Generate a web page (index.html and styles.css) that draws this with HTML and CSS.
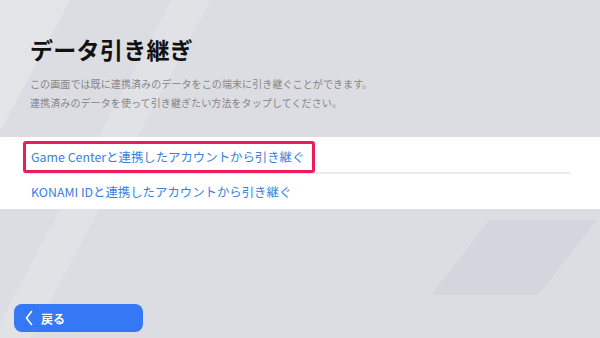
FILE: index.html
```
<!DOCTYPE html>
<html lang="ja">
<head>
<meta charset="utf-8">
<title>データ引き継ぎ</title>
<link rel="stylesheet" href="styles.css">
</head>
<body>

<div class="Screen">
    <div class="Header">
        <h1 class="Title">データ引き継ぎ</h1>
        <p class="Lead">
            この画面では既に連携済みのデータをこの端末に引き継ぐことができます。<br>
            連携済みのデータを使って引き継ぎたい方法をタップしてください。
        </p>
    </div>

    <div class="Panel">
        <ul class="MethodList">
            <li class="MethodRow First">
                <a class="MethodLink Selected" href="#">Game Centerと連携したアカウントから引き継ぐ</a>
            </li>
            <li class="MethodRow">
                <a class="MethodLink" href="#">KONAMI IDと連携したアカウントから引き継ぐ</a>
            </li>
        </ul>
    </div>

    <div class="Footer">
        <a class="BackButton" href="#">
            <svg class="BackIcon" width="8" height="16" viewBox="0 0 8 16">
                <path d="M6.5 1.5 L1.5 8 L6.5 14.5" fill="none" stroke="#fff" stroke-width="1.6" stroke-linecap="round" stroke-linejoin="round"/>
            </svg>
            <span>戻る</span>
        </a>
    </div>
</div>

</body>
</html>
```

FILE: styles.css
```
html, body {
    height: 100%;
    margin: 0;
}
body {
    font-family: "Noto Sans CJK JP", "Noto Sans", sans-serif;
    background-color: #dcdde2;
    background-image:
        linear-gradient(128deg, transparent 0 26%, rgba(176,182,202,0.18) 26% 73%, transparent 73% 100%),
        linear-gradient(118deg, rgba(255,255,255,0.22) 0 9%, transparent 9% 100%),
        linear-gradient(118deg, transparent 0 22%, rgba(255,255,255,0.14) 22% 27%, transparent 27% 100%);
    background-size: 170px 75px, 100% 100%, 100% 100%;
    background-position: 430px 220px, 0 0, 0 0;
    background-repeat: no-repeat;
    overflow: hidden;
}
.Screen {
    display: flex;
    flex-direction: column;
    height: 100%;
}
.Header {
    padding: 38px 30px 0 30px;
}
.Title {
    margin: 0;
    font-size: 23px;
    line-height: 23px;
    font-weight: 700;
    color: #111;
    letter-spacing: 0.3px;
}
.Lead {
    margin: 13px 0 0 0;
    font-size: 10px;
    line-height: 19px;
    color: #85868b;
    letter-spacing: 0.1px;
}
.Panel {
    margin-top: 25px;
    background: #fff;
    padding-top: 4px;
}
.MethodList {
    list-style: none;
    margin: 0 30px 0 23px;
    padding: 0;
}
.MethodRow {
    height: 35px;
    display: flex;
    align-items: center;
}
.MethodRow.First {
    height: 31px;
    align-items: flex-start;
    border-bottom: 2px solid #ebebee;
}
.MethodLink {
    display: inline-block;
    padding: 0 8px;
    font-size: 12.4px;
    color: #3b7fdc;
    text-decoration: none;
}
.MethodLink.Selected {
    box-sizing: border-box;
    height: 32px;
    line-height: 26px;
    padding: 0 8px 0 5px;
    border: 3px solid #ec1c5c;
    border-radius: 3px;
}
.Footer {
    margin-top: auto;
    padding: 0 0 6px 14px;
}
.BackButton {
    display: flex;
    align-items: center;
    box-sizing: border-box;
    width: 129px;
    height: 28px;
    padding-left: 11px;
    background: #3478f5;
    border-radius: 8px;
    color: #fff;
    text-decoration: none;
    font-size: 12px;
    font-weight: 700;
}
.BackIcon {
    margin-right: 8px;
}
```
